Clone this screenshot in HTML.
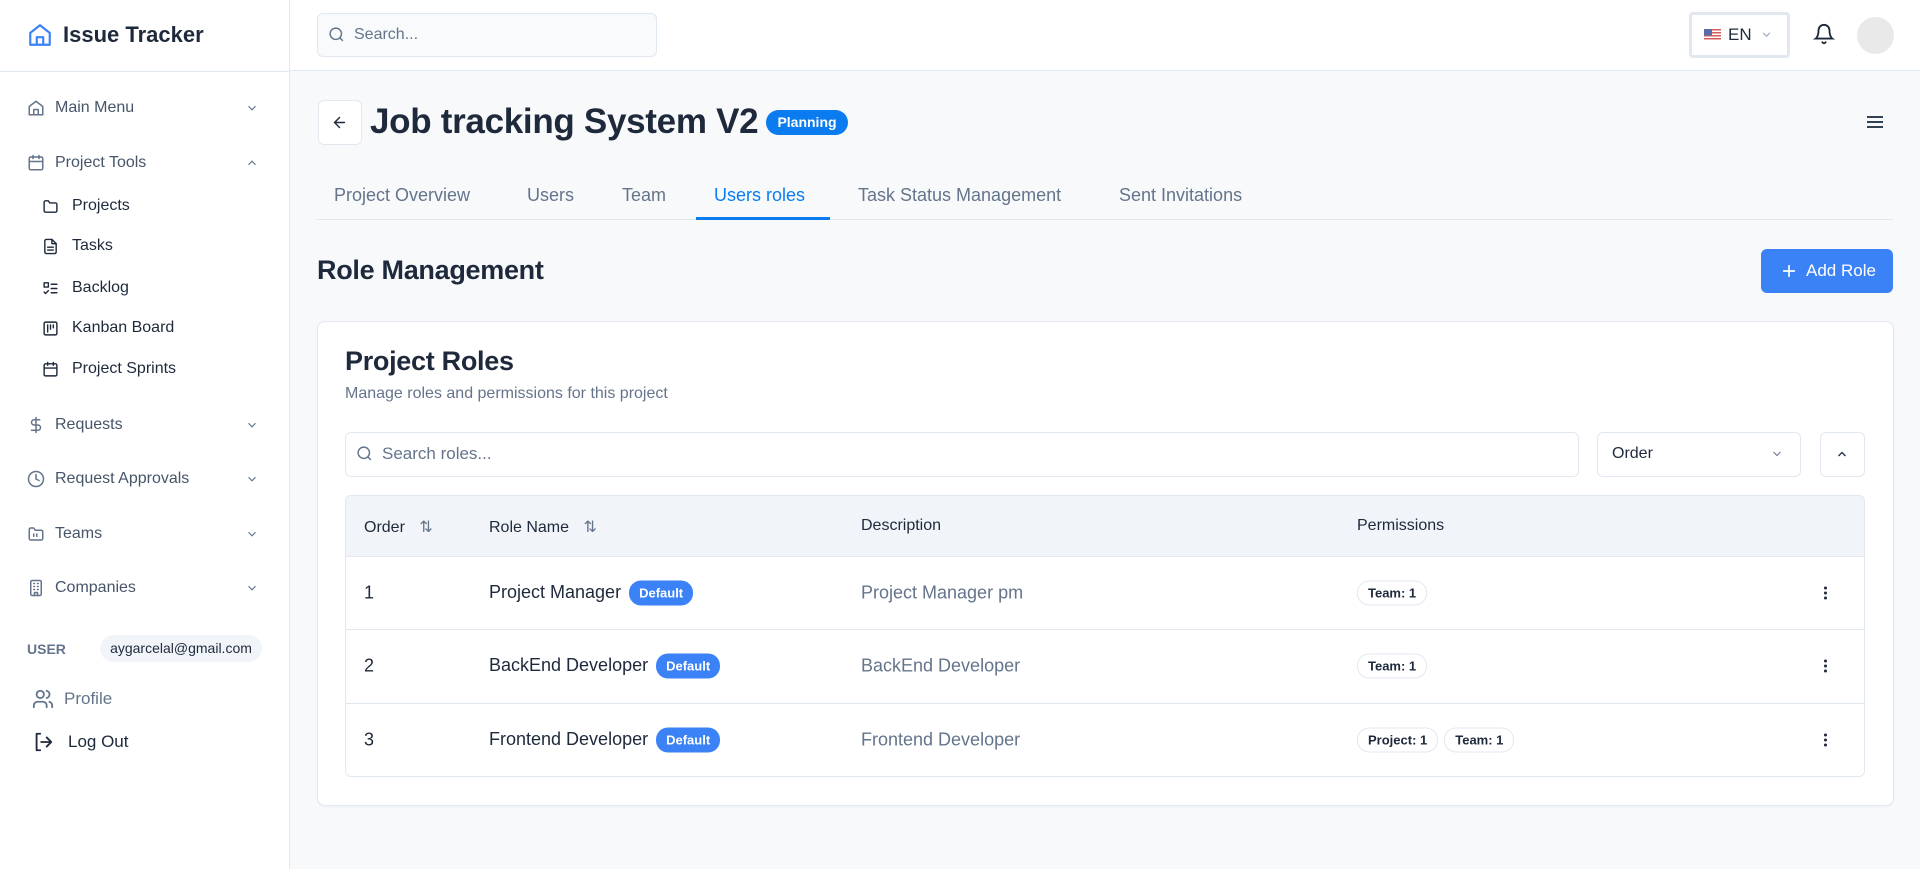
<!DOCTYPE html>
<html><head><meta charset="utf-8"><style>
*{box-sizing:border-box;margin:0;padding:0}
body{width:1920px;height:869px;overflow:hidden;font-family:"Liberation Sans",sans-serif;background:#f8f9fb;color:#1e293b;position:relative}
.a{position:absolute}
.side{left:0;top:0;width:290px;height:869px;background:#fff;border-right:1px solid #e2e8f0}
.hdr{left:290px;top:0;width:1630px;height:71px;background:#fff;border-bottom:1px solid #e2e8f0}
.si{position:absolute;left:27px;display:flex;align-items:center;font-size:16px;line-height:20px;color:#475569;transform:translateY(-50%)}
.si svg{display:block;width:18px;height:18px;margin-right:10px;stroke:#64748b;fill:none;stroke-width:2;stroke-linecap:round;stroke-linejoin:round}
.sub{position:absolute;left:42px;display:flex;align-items:center;font-size:16px;line-height:20px;color:#1e293b;transform:translateY(-50%)}
.sub svg{display:block;width:17px;height:17px;margin-right:13px;stroke:#1e293b;fill:none;stroke-width:2;stroke-linecap:round;stroke-linejoin:round}
.chev{position:absolute;left:245px;width:14px;height:14px;transform:translateY(-50%);stroke:#64748b;fill:none;stroke-width:2}
.tab{position:absolute;top:185px;font-size:18px;color:#64748b}
.th{position:absolute;top:517px;font-size:16px;color:#1e293b}
.cell{position:absolute;font-size:18px;transform:translateY(-50%)}
.badge{display:inline-block;background:#3b82f6;color:#fff;font-size:13px;font-weight:bold;padding:5px 10px;border-radius:12px;margin-left:8px;vertical-align:middle}
.perm{display:inline-block;border:1px solid #e2e8f0;border-radius:12px;font-size:13px;font-weight:bold;padding:4px 10px;margin-right:6px;background:#fff}
.kebab{position:absolute;left:1824px;width:4px;transform:translateY(-50%)}
.kebab i{display:block;width:3px;height:3px;background:#1e293b;border-radius:50%;margin:2px 0}
</style></head><body>
<div class="a side"></div>
<div class="a hdr"></div>
<svg class="a" style="left:27px;top:22px" width="26" height="26" viewBox="0 0 24 24" fill="none" stroke="#3b82f6" stroke-width="2" stroke-linejoin="round"><path d="M3 10 12 3l9 7v11H3z"/><path d="M9 21v-7h6v7"/></svg>
<div class="a" style="left:63px;top:22px;font-size:22px;font-weight:bold;color:#1e293b">Issue Tracker</div>
<div class="a" style="left:0;top:71px;width:290px;border-top:1px solid #e2e8f0"></div>

<div class="si" style="top:108px"><svg viewBox="0 0 24 24"><path d="M3 10 12 3l9 7v11H3z"/><path d="M9 21v-7h6v7"/></svg>Main Menu</div>
<svg class="chev" style="top:108px" viewBox="0 0 24 24"><path d="m6 9 6 6 6-6"/></svg>
<div class="si" style="top:163px"><svg viewBox="0 0 24 24"><rect x="3" y="4" width="18" height="17" rx="2"/><path d="M8 2v4M16 2v4M3 10h18"/></svg>Project Tools</div>
<svg class="chev" style="top:163px" viewBox="0 0 24 24"><path d="m6 15 6-6 6 6"/></svg>
<div class="sub" style="top:206px"><svg viewBox="0 0 24 24"><path d="M3 6a2 2 0 0 1 2-2h4l2 3h8a2 2 0 0 1 2 2v9a2 2 0 0 1-2 2H5a2 2 0 0 1-2-2z"/></svg>Projects</div>
<div class="sub" style="top:246px"><svg viewBox="0 0 24 24"><path d="M14 2H6a2 2 0 0 0-2 2v16a2 2 0 0 0 2 2h12a2 2 0 0 0 2-2V8z"/><path d="M14 2v6h6M8 13h8M8 17h8"/></svg>Tasks</div>
<div class="sub" style="top:288px"><svg viewBox="0 0 24 24"><rect x="3" y="4" width="6" height="6"/><path d="m3 17 2 2 4-4M13 6h8M13 12h8M13 18h8"/></svg>Backlog</div>
<div class="sub" style="top:328px"><svg viewBox="0 0 24 24"><rect x="3" y="3" width="18" height="18" rx="2"/><path d="M8 7v10M12 7v6M16 7v4"/></svg>Kanban Board</div>
<div class="sub" style="top:369px"><svg viewBox="0 0 24 24"><rect x="3" y="4" width="18" height="17" rx="2"/><path d="M8 2v4M16 2v4M3 10h18"/></svg>Project Sprints</div>
<div class="si" style="top:425px"><svg viewBox="0 0 24 24"><path d="M12 2v20M17 5H9.5a3.5 3.5 0 0 0 0 7h5a3.5 3.5 0 0 1 0 7H6"/></svg>Requests</div>
<svg class="chev" style="top:425px" viewBox="0 0 24 24"><path d="m6 9 6 6 6-6"/></svg>
<div class="si" style="top:479px"><svg viewBox="0 0 24 24"><circle cx="12" cy="12" r="10"/><path d="M12 6v6l4 2"/></svg>Request Approvals</div>
<svg class="chev" style="top:479px" viewBox="0 0 24 24"><path d="m6 9 6 6 6-6"/></svg>
<div class="si" style="top:534px"><svg viewBox="0 0 24 24"><path d="M3 6a2 2 0 0 1 2-2h4l2 3h8a2 2 0 0 1 2 2v9a2 2 0 0 1-2 2H5a2 2 0 0 1-2-2z"/><path d="M9 12v3M13 12v3"/></svg>Teams</div>
<svg class="chev" style="top:534px" viewBox="0 0 24 24"><path d="m6 9 6 6 6-6"/></svg>
<div class="si" style="top:588px"><svg viewBox="0 0 24 24"><rect x="5" y="2" width="14" height="20" rx="2"/><path d="M9 6h1M14 6h1M9 10h1M14 10h1M9 14h1M14 14h1M10 22v-4h4v4"/></svg>Companies</div>
<svg class="chev" style="top:588px" viewBox="0 0 24 24"><path d="m6 9 6 6 6-6"/></svg>
<div class="a" style="left:27px;top:641px;font-size:14px;font-weight:bold;color:#64748b">USER</div>
<div class="a" style="left:100px;top:635px;width:162px;height:27px;border-radius:14px;background:#f1f5f9;font-size:14px;color:#1e293b;text-align:center;line-height:27px">aygarcelal@gmail.com</div>
<div class="si" style="top:699px;left:32px;color:#64748b;font-size:17px"><svg viewBox="0 0 24 24" style="width:22px;height:22px"><circle cx="9" cy="7" r="4"/><path d="M2 21v-2a4 4 0 0 1 4-4h6a4 4 0 0 1 4 4v2M16 3.1a4 4 0 0 1 0 7.8M22 21v-2a4 4 0 0 0-3-3.9"/></svg>Profile</div>
<div class="si" style="top:742px;left:32px;color:#1e293b;font-size:17px"><svg viewBox="0 0 24 24" style="width:22px;height:22px;stroke:#1e293b;margin-right:14px"><path d="M9 3H5v18h4M16 17l5-5-5-5M21 12H10"/></svg>Log Out</div>

<div class="a" style="left:317px;top:13px;width:340px;height:44px;border:1px solid #e2e8f0;border-radius:6px;background:#f8fafc"></div>
<svg class="a" style="left:328px;top:26px" width="17" height="17" viewBox="0 0 24 24" fill="none" stroke="#64748b" stroke-width="2"><circle cx="11" cy="11" r="8"/><path d="m21 21-4.3-4.3"/></svg>
<div class="a" style="left:354px;top:26px;font-size:16px;color:#64748b">Search...</div>
<div class="a" style="left:1689px;top:12px;width:101px;height:46px;border:3px solid #e2e8f0;border-radius:4px;background:#fff"></div>
<svg class="a" style="left:1704px;top:29px" width="17" height="12" viewBox="0 0 17 12"><rect width="17" height="12" fill="#fff"/><g fill="#d65a5a"><rect y="0" width="17" height="1.5"/><rect y="3" width="17" height="1.5"/><rect y="6" width="17" height="1.5"/><rect y="9" width="17" height="1.5"/></g><rect width="8" height="6.5" fill="#5b6aa8"/></svg>
<div class="a" style="left:1728px;top:25px;font-size:17px;color:#1e293b">EN</div>
<svg class="a" style="left:1760px;top:30px" width="13" height="10" viewBox="0 0 24 24" fill="none" stroke="#94a3b8" stroke-width="2.5"><path d="m4 7 8 8 8-8"/></svg>
<svg class="a" style="left:1813px;top:22px" width="22" height="24" viewBox="0 0 24 24" fill="none" stroke="#1e293b" stroke-width="2" stroke-linecap="round"><path d="M6 8a6 6 0 0 1 12 0c0 7 3 9 3 9H3s3-2 3-9M10.3 21a1.9 1.9 0 0 0 3.4 0"/></svg>
<div class="a" style="left:1857px;top:17px;width:37px;height:37px;border-radius:50%;background:#e9e9ea"></div>

<div class="a" style="left:318px;top:100px;width:44px;height:45px;border:1px solid #e2e8f0;border-radius:6px;background:#fff"></div>
<svg class="a" style="left:331px;top:114px" width="17" height="17" viewBox="0 0 24 24" fill="none" stroke="#1e293b" stroke-width="2" stroke-linecap="round"><path d="M19 12H5M12 19l-7-7 7-7"/></svg>
<div class="a" style="left:370px;top:102px;font-size:35px;font-weight:bold;color:#1e293b;letter-spacing:-0.3px">Job tracking System V2</div>
<div class="a" style="left:766px;top:110px;width:82px;height:25px;border-radius:13px;background:#0a7cf0;color:#fff;font-size:14px;font-weight:bold;text-align:center;line-height:25px">Planning</div>
<svg class="a" style="left:1866px;top:114px" width="18" height="16" viewBox="0 0 18 16" stroke="#334155" stroke-width="2"><path d="M1 3h16M1 8h16M1 13h16"/></svg>

<div class="tab" style="left:334px">Project Overview</div>
<div class="tab" style="left:527px">Users</div>
<div class="tab" style="left:622px">Team</div>
<div class="tab" style="left:714px;color:#0a7cf0">Users roles</div>
<div class="tab" style="left:858px">Task Status Management</div>
<div class="tab" style="left:1119px">Sent Invitations</div>
<div class="a" style="left:317px;top:219px;width:1576px;border-top:1px solid #e2e8f0"></div>
<div class="a" style="left:696px;top:217px;width:134px;height:3px;background:#0a7cf0"></div>

<div class="a" style="left:317px;top:255px;font-size:27px;font-weight:bold;color:#1e293b;letter-spacing:-0.3px">Role Management</div>
<div class="a" style="left:1761px;top:249px;width:132px;height:44px;border-radius:6px;background:#3b82f6;color:#fff;font-size:17px;line-height:44px;padding-left:45px">Add Role</div>
<svg class="a" style="left:1781px;top:263px" width="16" height="16" viewBox="0 0 24 24" stroke="#fff" stroke-width="2.5" stroke-linecap="round"><path d="M12 4v16M4 12h16"/></svg>

<div class="a" style="left:317px;top:321px;width:1577px;height:485px;background:#fff;border:1px solid #e2e8f0;border-radius:8px;box-shadow:0 1px 2px rgba(0,0,0,.04)"></div>
<div class="a" style="left:345px;top:346px;font-size:27px;font-weight:bold;color:#1e293b;letter-spacing:-0.3px">Project Roles</div>
<div class="a" style="left:345px;top:385px;font-size:16px;color:#64748b">Manage roles and permissions for this project</div>
<div class="a" style="left:345px;top:432px;width:1234px;height:45px;border:1px solid #e2e8f0;border-radius:6px"></div>
<svg class="a" style="left:356px;top:445px" width="17" height="17" viewBox="0 0 24 24" fill="none" stroke="#64748b" stroke-width="2"><circle cx="11" cy="11" r="8"/><path d="m21 21-4.3-4.3"/></svg>
<div class="a" style="left:382px;top:444px;font-size:17px;color:#64748b">Search roles...</div>
<div class="a" style="left:1597px;top:432px;width:204px;height:45px;border:1px solid #e2e8f0;border-radius:6px"></div>
<div class="a" style="left:1612px;top:445px;font-size:16px;color:#1e293b">Order</div>
<svg class="a" style="left:1770px;top:448px" width="14" height="12" viewBox="0 0 24 24" fill="none" stroke="#64748b" stroke-width="2"><path d="m5 8 7 7 7-7"/></svg>
<div class="a" style="left:1820px;top:432px;width:45px;height:45px;border:1px solid #e2e8f0;border-radius:6px"></div>
<svg class="a" style="left:1835px;top:448px" width="14" height="12" viewBox="0 0 24 24" fill="none" stroke="#1e293b" stroke-width="2.5"><path d="m5 16 7-7 7 7"/></svg>

<div class="a" style="left:345px;top:495px;width:1520px;height:282px;border:1px solid #e2e8f0;border-radius:6px;overflow:hidden">
<div style="height:61px;background:#f1f4f8;border-bottom:1px solid #e2e8f0"></div>
<div style="height:73px;border-bottom:1px solid #e2e8f0"></div>
<div style="height:74px;border-bottom:1px solid #e2e8f0"></div>
</div>
<div class="th" style="left:364px">Order <span style="color:#64748b;margin-left:10px">⇅</span></div>
<div class="th" style="left:489px">Role Name <span style="color:#64748b;margin-left:10px">⇅</span></div>
<div class="th" style="left:861px">Description</div>
<div class="th" style="left:1357px">Permissions</div>

<div class="cell" style="left:364px;top:593px">1</div>
<div class="cell" style="left:489px;top:593px">Project Manager<span class="badge">Default</span></div>
<div class="cell" style="left:861px;top:593px;color:#64748b">Project Manager pm</div>
<div class="cell" style="left:1357px;top:593px"><span class="perm">Team: 1</span></div>
<div class="kebab" style="top:593px"><i></i><i></i><i></i></div>

<div class="cell" style="left:364px;top:666px">2</div>
<div class="cell" style="left:489px;top:666px">BackEnd Developer<span class="badge">Default</span></div>
<div class="cell" style="left:861px;top:666px;color:#64748b">BackEnd Developer</div>
<div class="cell" style="left:1357px;top:666px"><span class="perm">Team: 1</span></div>
<div class="kebab" style="top:666px"><i></i><i></i><i></i></div>

<div class="cell" style="left:364px;top:740px">3</div>
<div class="cell" style="left:489px;top:740px">Frontend Developer<span class="badge">Default</span></div>
<div class="cell" style="left:861px;top:740px;color:#64748b">Frontend Developer</div>
<div class="cell" style="left:1357px;top:740px"><span class="perm">Project: 1</span><span class="perm">Team: 1</span></div>
<div class="kebab" style="top:740px"><i></i><i></i><i></i></div>
</body></html>
